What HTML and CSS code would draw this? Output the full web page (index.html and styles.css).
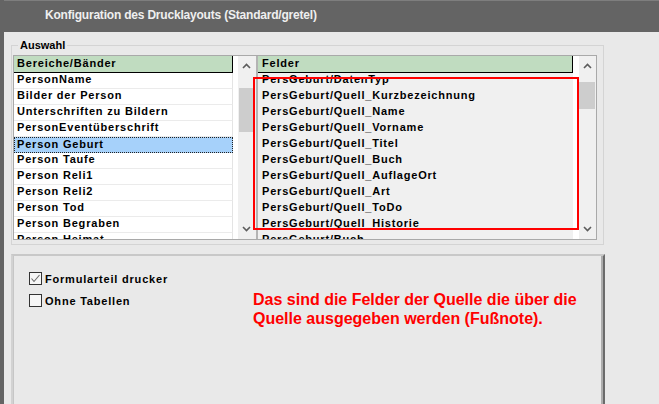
FILE: index.html
```html
<!DOCTYPE html>
<html lang="de">
<head>
<meta charset="utf-8">
<title>Konfiguration des Drucklayouts</title>
<link rel="stylesheet" href="styles.css">
</head>
<body>
<div class="window">
  <div class="titlebar">Konfiguration des Drucklayouts (Standard/gretel)</div>
  <div class="groupbox">
    <span class="group-label">Auswahl</span>
    <div class="listbox">
      <div class="pane pane-left">
        <div class="col col-left">
          <div class="hdr">Bereiche/Bänder</div>
          <div class="row">PersonName</div>
          <div class="row">Bilder der Person</div>
          <div class="row">Unterschriften zu Bildern</div>
          <div class="row">PersonEventüberschrift</div>
          <div class="row selected">Person Geburt</div>
          <div class="row">Person Taufe</div>
          <div class="row">Person Reli1</div>
          <div class="row">Person Reli2</div>
          <div class="row">Person Tod</div>
          <div class="row">Person Begraben</div>
          <div class="row">Person Heimat</div>
        </div>
      </div>
      <div class="scrollbar scrollbar-left">
        <div class="sb-btn"><svg width="9" height="6" viewBox="0 0 9 6"><polyline points="1,5 4.5,1.5 8,5" fill="none" stroke="#5c5c5c" stroke-width="1.6"/></svg></div>
        <div class="sb-track"><div class="thumb thumb-left"></div></div>
        <div class="sb-btn"><svg width="9" height="6" viewBox="0 0 9 6"><polyline points="1,1 4.5,4.5 8,1" fill="none" stroke="#5c5c5c" stroke-width="1.6"/></svg></div>
      </div>
      <div class="pane pane-right">
        <div class="col col-right">
          <div class="hdr">Felder</div>
          <div class="row">PersGeburt/DatenTyp</div>
          <div class="row">PersGeburt/Quell_Kurzbezeichnung</div>
          <div class="row">PersGeburt/Quell_Name</div>
          <div class="row">PersGeburt/Quell_Vorname</div>
          <div class="row">PersGeburt/Quell_Titel</div>
          <div class="row">PersGeburt/Quell_Buch</div>
          <div class="row">PersGeburt/Quell_AuflageOrt</div>
          <div class="row">PersGeburt/Quell_Art</div>
          <div class="row">PersGeburt/Quell_ToDo</div>
          <div class="row">PersGeburt/Quell_Historie</div>
          <div class="row">PersGeburt/Buch</div>
        </div>
      </div>
      <div class="scrollbar scrollbar-right">
        <div class="sb-btn"><svg width="9" height="6" viewBox="0 0 9 6"><polyline points="1,5 4.5,1.5 8,5" fill="none" stroke="#5c5c5c" stroke-width="1.6"/></svg></div>
        <div class="sb-track"><div class="thumb thumb-right"></div></div>
        <div class="sb-btn"><svg width="9" height="6" viewBox="0 0 9 6"><polyline points="1,1 4.5,4.5 8,1" fill="none" stroke="#5c5c5c" stroke-width="1.6"/></svg></div>
      </div>
      <div class="callout"></div>
    </div>
  </div>
  <div class="panel">
    <div class="options">
      <label class="check"><span class="box"><svg width="11" height="11" viewBox="0 0 11 11"><polyline points="1.5,5.5 4,8.5 9.5,2" fill="none" stroke="#6a6a6a" stroke-width="1.1"/></svg></span>Formularteil drucker</label>
      <label class="check"><span class="box"></span>Ohne Tabellen</label>
    </div>
    <p class="note">Das sind die Felder der Quelle die über die<br>Quelle ausgegeben werden (Fußnote).</p>
  </div>
</div>
</body>
</html>
```

FILE: styles.css
```css
* { box-sizing: border-box; }

html, body {
  margin: 0;
  padding: 0;
  width: 659px;
  height: 404px;
  overflow: hidden;
  background: #e9e9e9;
  font-family: "Liberation Sans", Arial, sans-serif;
}

.window {
  height: 404px;
  border-left: 4px solid #646464;
  overflow: hidden;
}

.titlebar {
  height: 32px;
  background: #646464;
  border-top: 1px solid #7e7e7e;
  color: #efefef;
  font-weight: bold;
  font-size: 12px;
  letter-spacing: -0.2px;
  line-height: 14px;
  padding: 7px 0 0 41px;
  white-space: nowrap;
}

.groupbox {
  position: relative;
  margin: 13px 0 0 7px;
  width: 593px;
  height: 200px;
  border: 1px solid #d4d4d4;
  padding: 9px 0 0 1px;
}

.group-label {
  position: absolute;
  top: -7px;
  left: 6px;
  padding: 0 2px;
  background: #e9e9e9;
  font-size: 11px;
  font-weight: bold;
  line-height: 13px;
  color: #000;
}

.listbox {
  position: relative;
  display: flex;
  width: 584px;
  height: 185px;
  border: 1px solid #a9a9a9;
  background: #fff;
}

.pane {
  flex: none;
  height: 100%;
  overflow: hidden;
}

.pane-left {
  width: 224px;
  background: #fff;
}

.pane-right {
  width: 317px;
  border-left: 2px solid #b4b4b4;
  background: #fff;
}

.col {
  font-size: 11px;
  font-weight: bold;
  letter-spacing: 0.8px;
  color: #000;
  white-space: nowrap;
}

.col-left { width: 219px; }
.col-right { width: 315px; }

.hdr {
  height: 17px;
  padding-top: 1px;
  line-height: 13px;
  background: #c0dcc0;
  border-right: 1px solid #000;
  border-bottom: 1px solid #000;
}

.col-left .hdr { padding-left: 3px; }
.col-right .hdr { padding-left: 4px; }

.row {
  height: 16px;
  line-height: 13px;
  padding-bottom: 2px;
  overflow: hidden;
}

.col-left .row {
  padding-left: 3px;
  background: #fff;
  border-bottom: 1px solid #ebebeb;
  border-right: 1px solid #e4e4e4;
}

.col-left .row.selected {
  background: #a6d1fa;
  border: 1px dotted #222;
  padding-left: 2px;
  line-height: 12px;
}

.col-right .row {
  padding-left: 4px;
  background: #f0f0f0;
}

.scrollbar {
  flex: none;
  display: flex;
  flex-direction: column;
  height: 100%;
  background: #f0f0f0;
}

.scrollbar-left { width: 18px; }
.scrollbar-right { width: 17px; margin-left: 6px; }

.sb-btn {
  height: 20px;
  display: flex;
  align-items: center;
  justify-content: center;
}

.scrollbar-left .sb-btn { padding-right: 1px; }

.sb-track {
  flex: 1;
}

.thumb {
  background: #cdcdcd;
}

.thumb-left {
  margin: 12px 1px 0 1px;
  height: 44px;
}

.thumb-right {
  margin: 6px 1px 0 0;
  height: 27px;
}

.callout {
  position: absolute;
  left: 239px;
  top: 21px;
  width: 326px;
  height: 153px;
  border: 2px solid #ff0000;
  pointer-events: none;
}

.panel {
  display: grid;
  grid-template-columns: 224px 1fr;
  margin: 9px 0 0 7px;
  width: 594px;
  height: 160px;
  border-top: 2px solid #c8c8c8;
  border-left: 2px solid #d2d2d2;
  border-right: 2px solid #6b6b6b;
  box-shadow: inset -2px 0 0 #adadad, inset 1px 0 0 #c6c6c6;
  padding: 16px 0 0 16px;
}

.options {
  display: flex;
  flex-direction: column;
  gap: 9px;
}

.check {
  display: flex;
  align-items: center;
  gap: 3px;
  height: 13px;
  font-size: 11px;
  font-weight: bold;
  letter-spacing: 0.8px;
  color: #000;
  white-space: nowrap;
}

.box {
  width: 13px;
  height: 13px;
  flex: none;
  border: 1px solid #333;
  background: #f6f6f6;
  display: flex;
  align-items: center;
  justify-content: center;
}

.note {
  margin: 18px 0 0 0;
  color: #ff0000;
  font-size: 16px;
  font-weight: bold;
  line-height: 19px;
  white-space: nowrap;
}
```
